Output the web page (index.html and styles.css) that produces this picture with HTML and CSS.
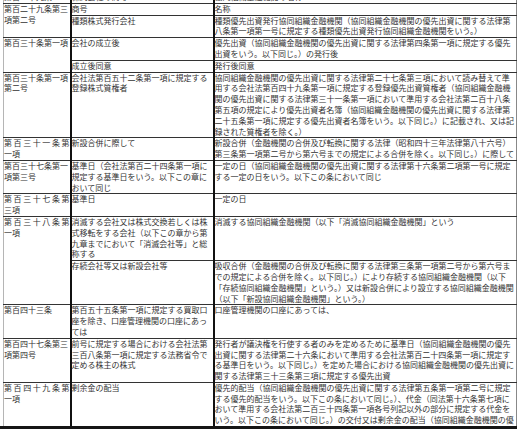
FILE: index.html
```html
<!DOCTYPE html>
<html lang="ja">
<head>
<meta charset="utf-8">
<title>読替表</title>
<link rel="stylesheet" href="styles.css">
</head>
<body>
<div class="viewport">
<table class="law">
<colgroup><col class="c1"><col class="c2"><col class="c3"></colgroup>
<tbody>
<tr class="cut"><td>第百二十九条</td><td>株式会社の商号</td><td>協同組織金融機関の名称</td></tr>
<tr><td rowspan="2">第百二十九条第三項第二号</td><td>商号</td><td>名称</td></tr>
<tr><td>種類株式発行会社</td><td>種類優先出資発行協同組織金融機関（協同組織金融機関の優先出資に関する法律第八条第一項第一号に規定する種類優先出資発行協同組織金融機関をいう。）</td></tr>
<tr><td rowspan="2">第百三十条第一項</td><td>会社の成立後</td><td>優先出資（協同組織金融機関の優先出資に関する法律第四条第一項に規定する優先出資をいう。以下同じ。）の発行後</td></tr>
<tr><td>成立後同意</td><td>発行後同意</td></tr>
<tr><td>第百三十条第一項第二号</td><td>会社法第百五十二条第一項に規定する登録株式質権者</td><td>協同組織金融機関の優先出資に関する法律第二十七条第三項において読み替えて準用する会社法第百四十九条第一項に規定する登録優先出資質権者（協同組織金融機関の優先出資に関する法律第三十一条第一項において準用する会社法第二百十八条第五項の規定により優先出資者名簿（協同組織金融機関の優先出資に関する法律第二十五条第一項に規定する優先出資者名簿をいう。以下同じ。）に記載され、又は記録された質権者を除く。）</td></tr>
<tr><td><span class="dist">第百三十一条第</span>一項</td><td>新設合併に際して</td><td>新設合併（金融機関の合併及び転換に関する法律（昭和四十三年法律第八十六号）第三条第一項第二号から第六号までの規定による合併を除く。以下同じ。）に際して</td></tr>
<tr><td>第百三十七条第一項第三号</td><td>基準日（会社法第百二十四条第一項に規定する基準日をいう。以下この章において同じ</td><td>一定の日（協同組織金融機関の優先出資に関する法律第十六条第二項第一号に規定する一定の日をいう。以下この条において同じ</td></tr>
<tr><td><span class="dist">第百三十七条第</span>三項</td><td>基準日</td><td>一定の日</td></tr>
<tr><td rowspan="2"><span class="dist">第百三十八条第</span>一項</td><td>消滅する会社又は株式交換若しくは株式移転をする会社（以下この章から第九章までにおいて「消滅会社等」と総称する</td><td>消滅する協同組織金融機関（以下「消滅協同組織金融機関」という</td></tr>
<tr><td>存続会社等又は新設会社等</td><td>吸収合併（金融機関の合併及び転換に関する法律第三条第一項第二号から第六号までの規定による合併を除く。以下同じ。）により存続する協同組織金融機関（以下「存続協同組織金融機関」という。）又は新設合併により設立する協同組織金融機関<br>（以下「新設協同組織金融機関」という。）</td></tr>
<tr><td>第百四十三条</td><td>第百五十五条第一項に規定する買取口座を除き、口座管理機関の口座にあっては</td><td>口座管理機関の口座にあっては、</td></tr>
<tr><td>第百四十七条第三項第四号</td><td>前号に規定する場合における会社法第三百八条第一項に規定する法務省令で定める株主の株式</td><td>発行者が議決権を行使する者のみを定めるために基準日（協同組織金融機関の優先出資に関する法律第二十六条において準用する会社法第百二十四条第一項に規定する基準日をいう。以下同じ。）を定めた場合における協同組織金融機関の優先出資に関する法律第三十三条第三項に規定する優先出資</td></tr>
<tr><td><span class="dist">第百四十九条第</span>一項</td><td>剰余金の配当</td><td>優先的配当（協同組織金融機関の優先出資に関する法律第五条第一項第二号に規定する優先的配当をいう。以下この条において同じ。）、代金（同法第十六条第七項において準用する会社法第二百三十四条第一項各号列記以外の部分に規定する代金をいう。以下この条において同じ。）の交付又は剰余金の配当（協同組織金融機関の優先出資に関する法律第五条第一項第二号に規定する優先的配当を除く。）</td></tr>
</tbody>
</table>
</div>
</body>
</html>
```

FILE: styles.css
```css
html, body {
  margin: 0;
  padding: 0;
  background: #fff;
}

body {
  font-family: "Noto Sans CJK JP", "Noto Sans", sans-serif;
  font-size: 8px;
  color: #333;
}

.viewport {
  height: 426px;
  overflow: hidden;
  border-bottom: 3px solid #151515;
}

.law {
  border-collapse: collapse;
  table-layout: fixed;
  width: 513px;
  margin: -9px 0 0 3px;
}

.law col.c1 { width: 67px; }
.law col.c2 { width: 143px; }
.law col.c3 { width: 303px; }

.law td {
  border: 1px solid #333;
  padding: 0;
  line-height: 10.8px;
  vertical-align: top;
  text-align: left;
  white-space: normal;
}

.law .cut td {
  white-space: nowrap;
  overflow: hidden;
}

.law td:first-child { border-left-color: #b5b5b5; }
.law td:last-child { border-right-color: #888; }

.law td + td { border-left: 2px solid #111; }

.law tr td:only-child,
.law tr td:first-child:nth-last-child(2) { border-left: 2px solid #111; }

.dist {
  display: block;
  text-align: justify;
  text-align-last: justify;
}
```
